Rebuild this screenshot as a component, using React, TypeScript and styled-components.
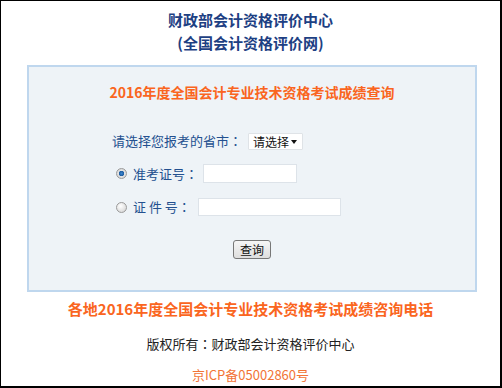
import * as React from "react";
import styled, { createGlobalStyle } from "styled-components";

const GlobalStyle = createGlobalStyle`
  html, body {
    margin: 0;
    padding: 0;
    background: #ffffff;
  }
  body {
    font-family: "Noto Sans CJK SC", "Noto Sans", sans-serif;
  }
`;

const Page = styled.div`
  box-sizing: border-box;
  width: 502px;
  height: 388px;
  border-style: solid;
  border-color: #000;
  border-width: 1px 2px 2px 1px;
  background: #fff;
  overflow: hidden;
`;

const Header = styled.div`
  padding-top: 7px;
  text-align: center;
  color: #1d4083;
  font-size: 15px;
  font-weight: bold;
  line-height: 23px;
`;

const Panel = styled.div`
  box-sizing: border-box;
  width: 450px;
  margin: 11px 0 0 26px;
  border: 2px solid #bfd7ee;
  background: #eef3f7;
  padding: 15px 0 31px;
`;

const QueryTitle = styled.div`
  text-align: center;
  color: #fa6520;
  font-size: 14px;
  font-weight: bold;
  line-height: 20px;
`;

const Row = styled.div<{ $top: number; $indent: number }>`
  display: flex;
  align-items: center;
  margin-top: ${(p) => p.$top}px;
  padding-left: ${(p) => p.$indent}px;
  font-size: 13px;
  line-height: 18px;
  color: #23508f;
`;

const Label = styled.label<{ $gap: number }>`
  white-space: pre;
  margin-right: ${(p) => p.$gap}px;
`;

// centred full-width colon, as in the original page
const Colon = styled.span`
  font-family: "Noto Sans CJK JP", "Noto Sans CJK SC", sans-serif;
`;

const SelectWrap = styled.div`
  position: relative;
  width: 55px;
  height: 17px;

  &::after {
    content: "";
    position: absolute;
    right: 6px;
    top: 7px;
    border-left: 3px solid transparent;
    border-right: 3px solid transparent;
    border-top: 4px solid #111;
    pointer-events: none;
  }
`;

const Select = styled.select`
  appearance: none;
  box-sizing: border-box;
  width: 100%;
  height: 100%;
  margin: 0;
  padding: 0 0 0 4px;
  border: 1px solid #dfe3e7;
  border-radius: 1px;
  background: #fff;
  color: #111;
  font-family: inherit;
  font-size: 12px;
  line-height: 15px;
  outline: none;
`;

const Radio = styled.input.attrs({ type: "radio" })`
  appearance: none;
  box-sizing: border-box;
  width: 11px;
  height: 11px;
  margin: 0 6px 0 0;
  border-radius: 50%;
  border: 1px solid #9a9a9a;
  background: radial-gradient(circle at 40% 35%, #ffffff, #cfcfcf);

  &:checked {
    background: radial-gradient(circle, #3b86d0 0, #1c5a9e 2.5px, #e4e4e4 3px, #cbcbcb 100%);
  }
`;

const TextInput = styled.input<{ $w: number; $h: number }>`
  box-sizing: border-box;
  width: ${(p) => p.$w}px;
  height: ${(p) => p.$h}px;
  margin: 0;
  padding: 0 3px;
  border: 1px solid #dde3e9;
  background: #fff;
  font-size: 12px;
  outline: none;
`;

const ButtonRow = styled.div`
  display: flex;
  justify-content: center;
  margin-top: 24px;
`;

const QueryButton = styled.button`
  box-sizing: border-box;
  width: 38px;
  height: 19px;
  padding: 0;
  border: 1px solid #777;
  border-radius: 3px;
  background: linear-gradient(#f6f6f6, #dedede);
  color: #111;
  font-family: inherit;
  font-size: 12px;
  line-height: 16px;
`;

const Footer = styled.div<{ $top: number; $size: number; $color: string; $bold?: boolean }>`
  margin-top: ${(p) => p.$top}px;
  text-align: center;
  font-size: ${(p) => p.$size}px;
  font-weight: ${(p) => (p.$bold ? "bold" : "normal")};
  color: ${(p) => p.$color};
  line-height: 20px;
`;

export default function App() {
  return (
    <>
      <GlobalStyle />
      <Page>
        <Header>
          <div>财政部会计资格评价中心</div>
          <div>(全国会计资格评价网)</div>
        </Header>
        <Panel>
          <QueryTitle>2016年度全国会计专业技术资格考试成绩查询</QueryTitle>
          <Row $top={30} $indent={83}>
            <Label $gap={6}>
              请选择您报考的省市<Colon>：</Colon>
            </Label>
            <SelectWrap>
              <Select defaultValue="">
                <option value="">请选择</option>
              </Select>
            </SelectWrap>
          </Row>
          <Row $top={14} $indent={87}>
            <Radio name="kind" defaultChecked />
            <Label $gap={5}>
              准考证号<Colon>：</Colon>
            </Label>
            <TextInput $w={94} $h={19} />
          </Row>
          <Row $top={15} $indent={87}>
            <Radio name="kind" />
            <Label $gap={7}>
              证 件 号<Colon>：</Colon>
            </Label>
            <TextInput $w={143} $h={18} />
          </Row>
          <ButtonRow>
            <QueryButton>查询</QueryButton>
          </ButtonRow>
        </Panel>
        <Footer $top={7} $size={15} $color="#fa6520" $bold>
          各地2016年度全国会计专业技术资格考试成绩咨询电话
        </Footer>
        <Footer $top={15} $size={13} $color="#222">
          版权所有<Colon>：</Colon>财政部会计资格评价中心
        </Footer>
        <Footer $top={11} $size={13} $color="#f27436">
          京ICP备05002860号
        </Footer>
      </Page>
    </>
  );
}
